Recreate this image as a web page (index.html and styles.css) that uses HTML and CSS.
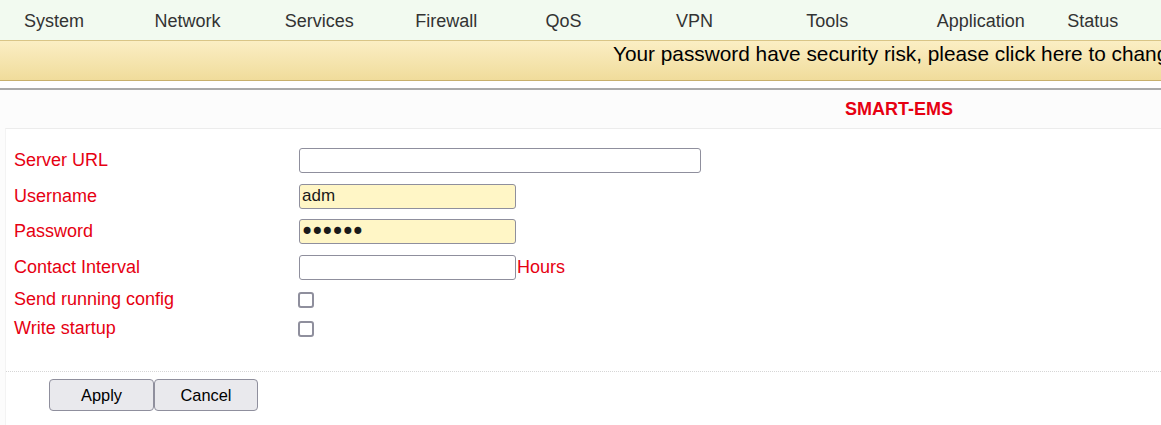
FILE: index.html
```html
<!DOCTYPE html>
<html lang="en">
<head>
    <meta charset="UTF-8">
    <meta name="viewport" content="width=device-width, initial-scale=1.0">
    <title>SMART-EMS</title>
    <link rel="stylesheet" href="styles.css">
</head>
<body>
    <div class="top-menu">
        <a class="menu-item">System</a>
        <a class="menu-item">Network</a>
        <a class="menu-item">Services</a>
        <a class="menu-item">Firewall</a>
        <a class="menu-item">QoS</a>
        <a class="menu-item">VPN</a>
        <a class="menu-item">Tools</a>
        <a class="menu-item">Application</a>
        <a class="menu-item">Status</a>
    </div>
    <div class="warn-bar">
        <span class="warn-text">Your password have security risk, please click here to change your password.</span>
    </div>

    <div class="page">
        <div class="page-title">SMART-EMS</div>
        <div class="form-box">
            <div class="form-rows">
                <div class="form-row tall">
                    <label class="form-label">Server URL</label>
                    <input class="text-input wide" type="text">
                </div>
                <div class="form-row tall">
                    <label class="form-label">Username</label>
                    <input class="text-input filled" type="text" value="adm">
                </div>
                <div class="form-row tall">
                    <label class="form-label">Password</label>
                    <input class="text-input filled secret" type="password" value="secret">
                </div>
                <div class="form-row tall">
                    <label class="form-label">Contact Interval</label>
                    <input class="text-input" type="text">
                    <span class="unit">Hours</span>
                </div>
                <div class="form-row short">
                    <label class="form-label">Send running config</label>
                    <input class="check" type="checkbox">
                </div>
                <div class="form-row short">
                    <label class="form-label">Write startup</label>
                    <input class="check" type="checkbox">
                </div>
            </div>
            <div class="button-bar">
                <button class="btn">Apply</button>
                <button class="btn">Cancel</button>
            </div>
        </div>
    </div>
</body>
</html>
```

FILE: styles.css
```css
body, html {
    margin: 0;
    padding: 0;
    width: 100%;
    height: 100%;
    overflow: hidden;
    font-family: "Liberation Sans", Arial, sans-serif;
    background-color: white;
}

.top-menu {
    display: flex;
    height: 40px;
    align-items: center;
    padding-left: 24px;
    background-color: #f2faf0;
    white-space: nowrap;
}
.menu-item {
    flex: 0 0 130.4px;
    font-size: 18px;
    line-height: 22px;
    padding-top: 1px;
    color: #333333;
    cursor: pointer;
}

.warn-bar {
    height: 39px;
    padding-left: 613px;
    border-top: 1px solid #d9c587;
    border-bottom: 1px solid #c8b06c;
    background: linear-gradient(#fbeec4, #f0dc9b);
    white-space: nowrap;
    overflow: hidden;
}
.warn-text {
    display: inline-block;
    font-size: 20.8px;
    line-height: 25px;
    color: black;
    cursor: pointer;
}

.page {
    margin-top: 7px;
    border-top: 2px solid #aaaaaa;
    background-color: #fcfcfc;
}
.page-title {
    height: 38px;
    line-height: 38px;
    padding-left: 845px;
    font-size: 18px;
    font-weight: bold;
    color: #e60012;
}

.form-box {
    margin-left: 5px;
    border-top: 1px solid #ececec;
    border-left: 1px solid #f3f3f3;
    background-color: white;
    padding-top: 14px;
    padding-bottom: 14px;
}
.form-rows {
    padding-bottom: 28px;
}
.form-row {
    display: flex;
    align-items: center;
    padding-left: 8px;
}
.form-row.tall {
    height: 35.5px;
}
.form-row.short {
    height: 29px;
}
.form-label {
    width: 285px;
    font-size: 18px;
    color: #e60012;
}
.text-input {
    box-sizing: border-box;
    width: 217px;
    height: 25px;
    margin: 0;
    padding: 0 2px;
    border: 1px solid #8f8f9d;
    border-radius: 3px;
    font-family: "Liberation Sans", Arial, sans-serif;
    font-size: 17px;
    color: #1a1a1a;
    background-color: white;
}
.text-input.wide {
    width: 402px;
}
.text-input.filled {
    background-color: #fff6c6;
}
.text-input.secret {
    padding-left: 0;
    font-family: "DejaVu Sans", sans-serif;
    font-size: 24px;
    letter-spacing: -4px;
}
.unit {
    font-size: 18px;
    color: #e60012;
    margin-left: 1px;
}
.check {
    appearance: none;
    box-sizing: border-box;
    width: 16px;
    height: 16px;
    margin: 0 0 0 -1px;
    border: 2px solid #8f8f9d;
    border-radius: 3px;
    background-color: white;
}

.button-bar {
    display: flex;
    padding-top: 7px;
    padding-left: 43px;
    border-top: 1px dotted #d6d6d6;
}
.btn {
    box-sizing: border-box;
    width: 105px;
    height: 32px;
    margin: 0;
    border: 1px solid #8f8f9d;
    border-radius: 4px;
    background-color: #e9e9ed;
    font-family: "Liberation Sans", Arial, sans-serif;
    font-size: 16.4px;
    color: black;
}
.btn + .btn {
    width: 104px;
}
```
